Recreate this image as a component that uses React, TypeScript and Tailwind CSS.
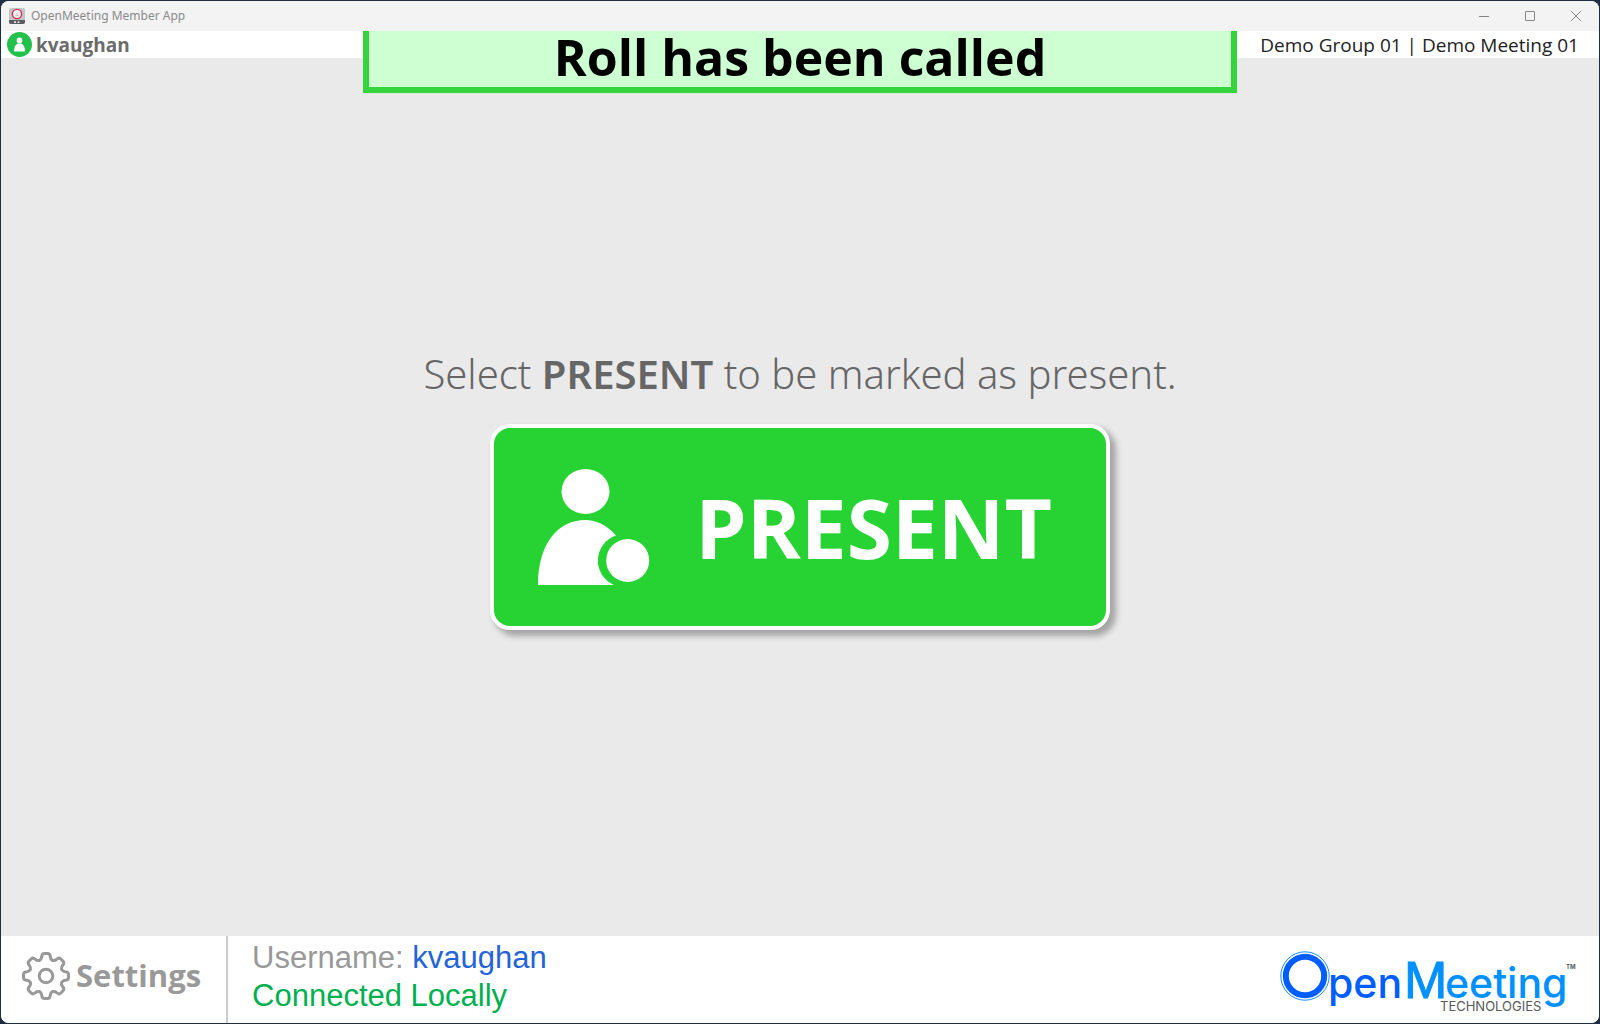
import type { ReactNode } from "react"

const TOOTH_ANGLES = [0, 45, 90, 135, 180, 225, 270, 315]

function AppIcon() {
  return (
    <svg viewBox="0 0 16 16" className="h-4 w-4" aria-hidden="true">
      <rect width="16" height="16" rx="2" fill="#c4c4c6" />
      <path d="M0 12h16v2a2 2 0 0 1-2 2H2a2 2 0 0 1-2-2z" fill="#5c5c5e" />
      <circle cx="8" cy="6" r="4.6" fill="#f3f0f1" stroke="#c8324f" strokeWidth="1.4" />
      <path d="M8 4.2l1 2.2H7zM6.2 7h3.6v1.2H6.2z" fill="#c9c4c6" />
      <path d="M5 13.2v1.8h2v-1.8zM8.6 13.2v1.8h1.8v-1.8z" fill="#e2e2e2" />
    </svg>
  )
}

function UserBadge() {
  return (
    <svg viewBox="0 0 25 25" className="h-[25px] w-[25px]" aria-hidden="true">
      <circle cx="12.5" cy="12.5" r="12.5" fill="#22c14c" />
      <circle cx="12.5" cy="8.4" r="2.8" fill="#fff" />
      <path d="M10.8 11.6h3.4c2.4 1 3.8 3.8 3.8 8H7c0-4.2 1.4-7 3.8-8z" fill="#fff" />
    </svg>
  )
}

function PresentIcon() {
  return (
    <svg viewBox="0 0 112 116" className="h-[116px] w-28 shrink-0" aria-hidden="true">
      <ellipse cx="47.5" cy="22.5" rx="24" ry="22.5" fill="#fff" />
      <path
        d="M0 116C0 76 19 51 47.5 51C58 51 69 56 78 66.5A26.5 26.5 0 0 0 76 116Z"
        fill="#fff"
      />
      <circle cx="89.7" cy="91.5" r="21.5" fill="#fff" />
    </svg>
  )
}

function GearIcon() {
  return (
    <svg viewBox="-24 -24 48 48" className="h-12 w-12" fill="none" stroke="#999" strokeWidth="3" strokeLinecap="round" aria-hidden="true">
      {TOOTH_ANGLES.map((angle) => (
        <path
          key={angle}
          transform={`rotate(${angle})`}
          d="M-6.5 -15.7Q-4.6 -16.5 -4.3 -19Q-4.2 -22.5 -1.5 -22.5H1.5Q4.2 -22.5 4.3 -19Q4.6 -16.5 6.5 -15.7"
        />
      ))}
      <circle r="6.8" />
    </svg>
  )
}

function Logo() {
  return (
    <svg viewBox="0 0 296 62" className="h-[62px] w-[296px]" role="img" aria-label="OpenMeeting Technologies">
      <circle cx="25" cy="25" r="24.2" fill="none" stroke="#1a8cff" />
      <circle cx="25" cy="25" r="19.2" fill="none" stroke="#005eff" strokeWidth="6" />
      <g fontFamily="Inter, sans-serif" fontSize="41" fontWeight="500">
        <text x="48" y="47" fill="#005eff">
          pen
        </text>
        <text x="124" y="47" fill="#0090ff">
          <tspan fontFamily="Liberation Sans, sans-serif" fontSize="52" fontWeight="400" stroke="#0090ff">M</tspan>
          <tspan x="165">eeting</tspan>
        </text>
      </g>
      <text x="160" y="60" fontFamily="Inter, sans-serif" fontSize="13" fill="#58595b">
        TECHNOLOGIES
      </text>
      <text x="286" y="18" fontFamily="Inter, sans-serif" fontSize="6" fontWeight="700" fill="#58595b">
        TM
      </text>
    </svg>
  )
}

function WindowButton({ label, children }: { label: string; children: ReactNode }) {
  return (
    <button type="button" aria-label={label} className="flex h-full w-[46px] items-center justify-center">
      <svg viewBox="0 0 10 10" className="h-[10px] w-[10px]" fill="none" stroke="#858585" aria-hidden="true">
        {children}
      </svg>
    </button>
  )
}

function TitleBar() {
  return (
    <div className="flex h-[30px] items-center bg-[#f3f3f3] pl-2">
      <AppIcon />
      <span className="ml-1.5 flex-1 font-['Noto_Sans',sans-serif] text-xs text-[#8a8a8a]">OpenMeeting Member App</span>
      <div className="flex h-full">
        <WindowButton label="Minimize">
          <path d="M0 5.5h10" />
        </WindowButton>
        <WindowButton label="Maximize">
          <rect x="0.5" y="0.5" width="9" height="9" rx="0.5" />
        </WindowButton>
        <WindowButton label="Close">
          <path d="M0 0l10 10M10 0L0 10" />
        </WindowButton>
      </div>
    </div>
  )
}

export default function App() {
  return (
    <div className="flex min-h-screen bg-[#1f2f42] p-px font-['Open_Sans',sans-serif]">
      <div className="flex flex-1 flex-col overflow-hidden rounded-lg bg-[#eaeaea]">
        <TitleBar />

        <div className="relative flex flex-1 flex-col">
          <header className="flex h-[27px] items-center justify-between bg-white pr-5 pl-1.5 text-[19px]">
            <div className="flex items-center gap-1">
              <UserBadge />
              <span className="pt-0.5 font-bold text-[#6b6b6b]">kvaughan</span>
            </div>
            <span className="pt-0.5 text-[#222]">Demo Group 01 | Demo Meeting 01</span>
          </header>

          <div className="absolute inset-x-0 top-0 flex justify-center">
            <h1 className="flex h-[62px] w-[54.7%] items-center justify-center border-6 border-t-0 border-[#36d43c] bg-[#cdffd3] pb-1 text-[50px] leading-none font-bold text-black">
              Roll has been called
            </h1>
          </div>

          <main className="flex flex-1 flex-col items-center justify-center gap-5 pb-5 text-center">
            <p className="font-['Noto_Sans',sans-serif] text-[40px] leading-[60px] font-light text-[#666]">
              Select <strong className="font-semibold">PRESENT</strong> to be marked as present.
            </p>
            <button
              type="button"
              className="flex h-[206px] w-[620px] items-center rounded-[20px] border-4 border-white bg-[#27d332] pr-[54px] pl-11 text-white shadow-[5px_5px_6px_1px_rgba(0,0,0,0.3)]"
            >
              <PresentIcon />
              <span className="flex-1 text-right text-[82px] leading-none font-bold">PRESENT</span>
            </button>
          </main>

          <footer className="flex h-[87px] items-stretch bg-white">
            <button
              type="button"
              className="flex items-center gap-1.5 border-r-2 border-[#ccc] pr-[25px] pb-2 pl-[21px] text-[31px] font-bold text-[#999]"
            >
              <GearIcon />
              Settings
            </button>
            <div className="flex flex-1 flex-col pt-[3px] pl-6 font-['Liberation_Sans',sans-serif] text-[31px] leading-[38px]">
              <p className="text-[#999]">
                Username: <span className="text-[#2563d9]">kvaughan</span>
              </p>
              <p className="text-[#00b050]">Connected Locally</p>
            </div>
            <div className="flex pt-[15px] pr-[23px]">
              <Logo />
            </div>
          </footer>
        </div>
      </div>
    </div>
  )
}
